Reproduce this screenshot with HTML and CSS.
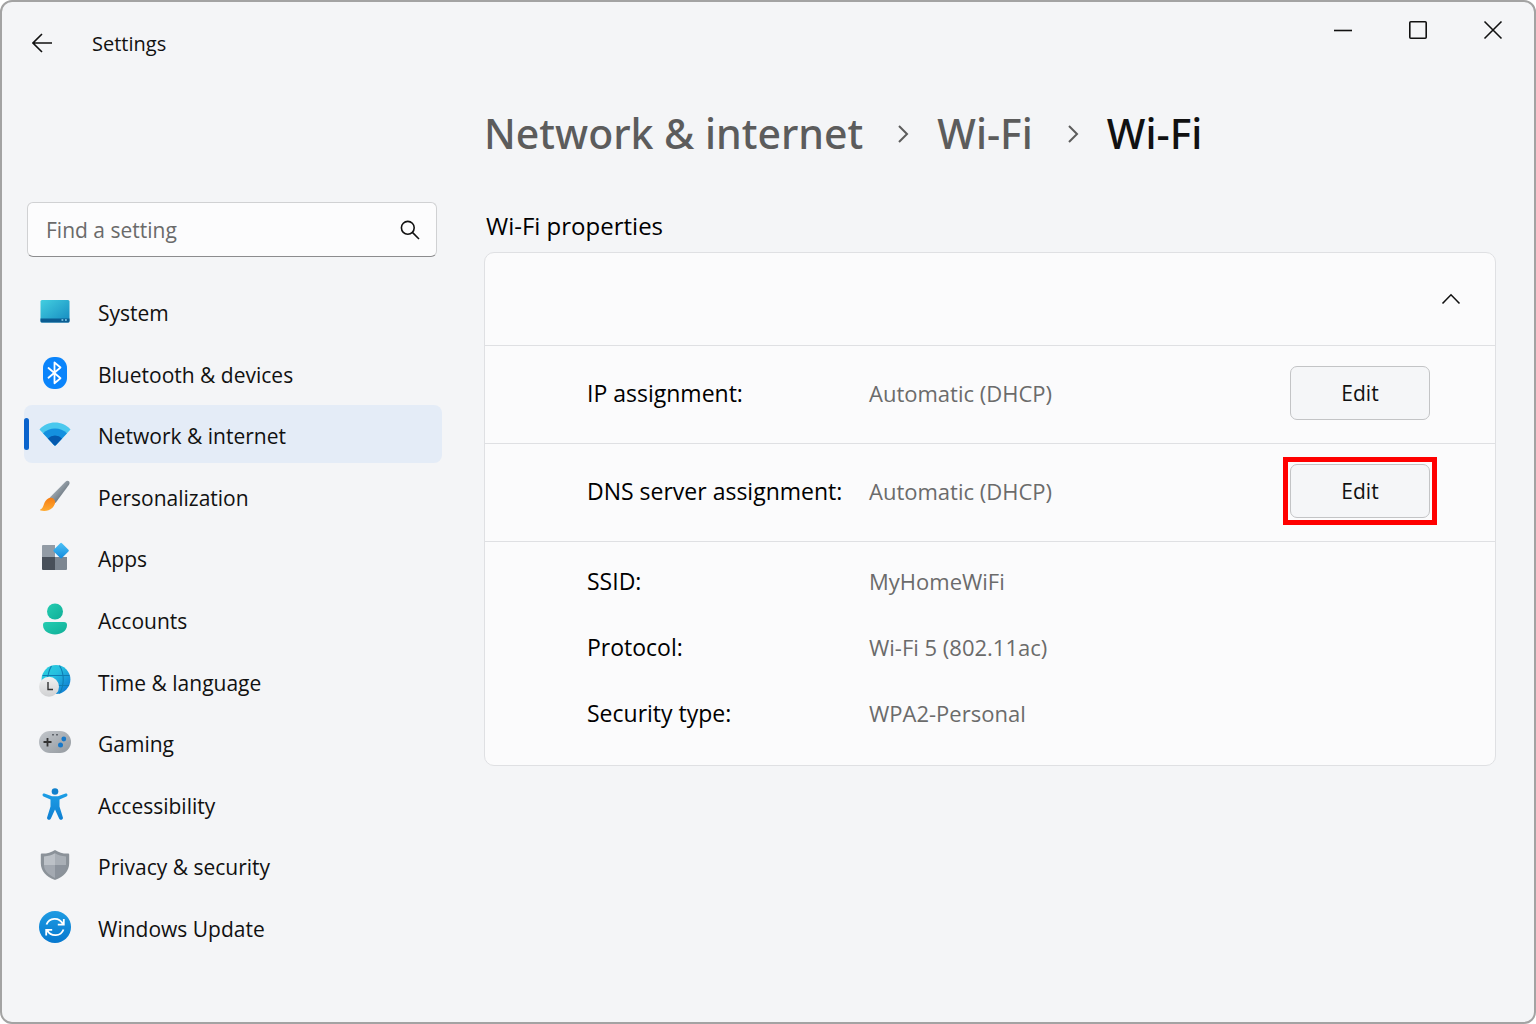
FILE: index.html
```
<!DOCTYPE html>
<html lang="en">
<head>
    <meta charset="UTF-8">
    <meta name="viewport" content="width=device-width, initial-scale=1.0">
    <title>Settings</title>
    <link rel="stylesheet" href="styles.css">
</head>
<body>

<div class="window">
    <header class="titlebar">
        <button class="back" type="button" aria-label="Back">
            <svg width="20" height="20" viewBox="0 0 20 20"><path d="M10 1L1 10l9 9M1 10h19"/></svg>
        </button>
        <span class="app-name">Settings</span>
        <div class="window-controls">
            <button type="button" aria-label="Minimize">
                <svg width="20" height="20" viewBox="0 0 20 20"><path d="M1 10.5h18"/></svg>
            </button>
            <button type="button" aria-label="Maximize">
                <svg width="20" height="20" viewBox="0 0 20 20"><rect x="1.8" y="1.8" width="16.4" height="16.4" rx="1"/></svg>
            </button>
            <button type="button" aria-label="Close">
                <svg width="20" height="20" viewBox="0 0 20 20"><path d="M1.5 1.5l17 17M18.5 1.5l-17 17"/></svg>
            </button>
        </div>
    </header>

    <div class="layout">
        <aside class="sidebar">
            <form class="search" role="search">
                <input type="search" placeholder="Find a setting" aria-label="Find a setting">
                <button type="button" aria-label="Search">
                    <svg width="20" height="20" viewBox="0 0 20 20"><circle cx="7.8" cy="7.8" r="6.4"/><path d="M12.4 12.4l6.6 6.6"/></svg>
                </button>
            </form>

            <nav class="menu">
                <a href="#">
                    <svg width="32" height="32" viewBox="0 0 32 32">
                        <defs>
                            <linearGradient id="sys" x1="0" y1="0" x2="1" y2="1"><stop offset="0" stop-color="#43cfe0"/><stop offset="1" stop-color="#1489c0"/></linearGradient>
                        </defs>
                        <rect x="1.5" y="5" width="29" height="22.5" rx="1.5" fill="url(#sys)"/>
                        <path d="M1.5 23.5h29V26a1.5 1.5 0 0 1-1.5 1.5H3A1.5 1.5 0 0 1 1.5 26z" fill="#0b5c91"/>
                        <path d="M22.5 25h1.8M26 25h1.8" stroke="#8cd3ee" stroke-width="1.4"/>
                    </svg>
                    System
                </a>
                <a href="#">
                    <svg width="32" height="32" viewBox="0 0 32 32">
                        <rect x="4" y="0" width="24" height="32" rx="11" fill="#0a84fb"/>
                        <path d="M9.5 11l12 10.2-6 5V5.5l6 5-12 10.2" fill="none" stroke="#fff" stroke-width="1.8" stroke-linejoin="round" stroke-linecap="round"/>
                    </svg>
                    Bluetooth &amp; devices
                </a>
                <a href="#" class="active" aria-current="page">
                    <svg width="32" height="32" viewBox="0 0 32 32">
                        <defs>
                            <clipPath id="fan"><path d="M.5 11.5C4.5 6.8 10 4.5 16 4.5s11.5 2.3 15.5 7L16.8 27.2a1.1 1.1 0 0 1-1.6 0z"/></clipPath>
                        </defs>
                        <g clip-path="url(#fan)">
                            <rect width="32" height="32" fill="#4ac8ee"/>
                            <circle cx="16" cy="27.5" r="17" fill="#1490df"/>
                            <circle cx="16" cy="27.5" r="10" fill="#0459ae"/>
                        </g>
                    </svg>
                    Network &amp; internet
                </a>
                <a href="#">
                    <svg width="32" height="32" viewBox="0 0 32 32">
                        <defs>
                            <linearGradient id="handle" x1="0" y1="0" x2="1" y2="1"><stop offset="0.3" stop-color="#a3adb5"/><stop offset="0.7" stop-color="#6b7680"/></linearGradient>
                            <linearGradient id="bristle" x1="0" y1="0" x2="0" y2="1"><stop offset="0" stop-color="#f57c12"/><stop offset="1" stop-color="#ffab32"/></linearGradient>
                        </defs>
                        <path d="M10.8 17.5L26.2 1.9c2.7-2.5 5.6-.1 3.8 2.8L16.5 23z" fill="url(#handle)"/>
                        <path d="M10 18c3.8-1.5 7.3 2 5.8 6-2 5.500-8 8-14.200 6.500-.8-.2-.7-1 .1-1.200C5.500 28 4 20.500 10 18z" fill="url(#bristle)"/>
                    </svg>
                    Personalization
                </a>
                <a href="#">
                    <svg width="32" height="32" viewBox="0 0 32 32">
                        <defs>
                            <linearGradient id="tile" x1="0" y1="0" x2="1" y2="1"><stop offset="0" stop-color="#4fc3f7"/><stop offset="1" stop-color="#1089dc"/></linearGradient>
                        </defs>
                        <path d="M4 4h12v12H3V5a1 1 0 0 1 1-1z" fill="#929ba5"/>
                        <path d="M3 16h13v13H4a1 1 0 0 1-1-1z" fill="#48505a"/>
                        <path d="M16 16h12v12a1 1 0 0 1-1 1H16z" fill="#7c8691"/>
                        <rect x="16.3" y="3.8" width="11.6" height="11.6" rx="1.2" transform="rotate(45 22.1 9.6)" fill="url(#tile)"/>
                    </svg>
                    Apps
                </a>
                <a href="#">
                    <svg width="32" height="32" viewBox="0 0 32 32">
                        <defs>
                            <linearGradient id="person" x1="0" y1="0" x2="1" y2="1"><stop offset="0" stop-color="#25cdb2"/><stop offset="1" stop-color="#0fae97"/></linearGradient>
                        </defs>
                        <circle cx="16" cy="8.5" r="8" fill="url(#person)"/>
                        <path d="M7 19h18a3 3 0 0 1 3 3c0 6-6 9.5-12 9.5S4 28 4 22a3 3 0 0 1 3-3z" fill="url(#person)"/>
                    </svg>
                    Accounts
                </a>
                <a href="#">
                    <svg width="32" height="32" viewBox="0 0 32 32">
                        <defs>
                            <linearGradient id="globe" x1="0" y1="0" x2="1" y2="1"><stop offset="0" stop-color="#2fd3dd"/><stop offset="0.4" stop-color="#25bfe0"/><stop offset="1" stop-color="#0b6ed0"/></linearGradient>
                            <linearGradient id="clock" x1="0" y1="0" x2="0" y2="1"><stop offset="0" stop-color="#f2f2f2"/><stop offset="1" stop-color="#cfd0d2"/></linearGradient>
                        </defs>
                        <circle cx="17" cy="14.5" r="14.4" fill="url(#globe)"/>
                        <path d="M3.5 10.5h27M4 20.5h26M12.5 1c-5 8-5 20 0 28M20.5.5c5 8 5 20 0 28" fill="none" stroke="#0f7db3" stroke-width="1.1"/>
                        <circle cx="10" cy="21.8" r="10" fill="url(#clock)"/>
                        <path d="M9 17v7.5h5" fill="none" stroke="#333" stroke-width="1.4"/>
                    </svg>
                    Time &amp; language
                </a>
                <a href="#">
                    <svg width="32" height="32" viewBox="0 0 32 32">
                        <defs>
                            <linearGradient id="pad" x1="0" y1="0" x2="1" y2="1"><stop offset="0" stop-color="#c3c7cc"/><stop offset="1" stop-color="#93999f"/></linearGradient>
                        </defs>
                        <rect x="0" y="5" width="32" height="22" rx="11" fill="url(#pad)"/>
                        <path d="M4.5 16h8M8.5 12v8.5" stroke="#333" stroke-width="1.8"/>
                        <path d="M13.2 8.8h1.6M17.2 8.8h1.6" stroke="#4b5157" stroke-width="1.6"/>
                        <circle cx="24.8" cy="13" r="2.4" fill="#1778c8"/>
                        <circle cx="21.5" cy="19" r="2.5" fill="#1778c8"/>
                    </svg>
                    Gaming
                </a>
                <a href="#">
                    <svg width="32" height="32" viewBox="0 0 32 32">
                        <defs>
                            <linearGradient id="acc" x1="0" y1="0" x2="0" y2="1"><stop offset="0" stop-color="#1c9ee6"/><stop offset="1" stop-color="#0f7fd2"/></linearGradient>
                        </defs>
                        <circle cx="16" cy="3.5" r="3.3" fill="#0f80cc"/>
                        <path d="M5.5 5.5L13 8.3h6l7.5-2.8c2-.6 2.8 2 1 2.9L20.5 11.5v7l3.4 11c.5 2.3-2.9 3.1-3.8 1L16 21.5 11.9 30.5c-.9 2.1-4.3 1.3-3.8-1l3.4-11v-7L4.5 8.4c-1.8-.9-1-3.5 1-2.9z" fill="url(#acc)"/>
                    </svg>
                    Accessibility
                </a>
                <a href="#">
                    <svg width="32" height="32" viewBox="0 0 32 32">
                        <defs>
                            <clipPath id="shield-in"><path d="M16 4.3c3 2 6.8 3 11 3.1V16c0 6-4.5 9.5-11 13C9.5 25.5 5 22 5 16V7.4C9.2 7.3 13 6.3 16 4.3z"/></clipPath>
                        </defs>
                        <path d="M16 1c3.8 2.6 8.5 3.8 13.3 3.6.5 0 .9.4.9.9V14c0 8-5.5 13.5-13.6 16.8-.4.2-.8.2-1.2 0C7.3 27.5 1.8 22 1.8 14V5.5c0-.5.4-.9.9-.9C7.5 4.8 12.2 3.6 16 1z" fill="#8b9299"/>
                        <g clip-path="url(#shield-in)">
                            <path d="M0 0h16v16H0z" fill="#bcc1c7"/>
                            <path d="M16 0h16v16H16z" fill="#a9afb6"/>
                            <path d="M0 16h16v16H0z" fill="#a3a9b1"/>
                            <path d="M16 16h16v16H16z" fill="#8c939c"/>
                        </g>
                    </svg>
                    Privacy &amp; security
                </a>
                <a href="#">
                    <svg width="32" height="32" viewBox="0 0 32 32">
                        <defs>
                            <linearGradient id="upd" x1="0" y1="0" x2="0" y2="1"><stop offset="0" stop-color="#1e9be2"/><stop offset="1" stop-color="#0678cf"/></linearGradient>
                        </defs>
                        <circle cx="16" cy="16" r="16" fill="url(#upd)"/>
                        <path d="M7.5 13.5c2.5-7 12.5-8 16.5-.5M24.8 8v5.7h-6M24.5 18.5c-2.5 7-12.5 8-16.5.5M7.2 24.5v-5.7h6" fill="none" stroke="#fff" stroke-width="1.8"/>
                    </svg>
                    Windows Update
                </a>
            </nav>
        </aside>

        <main class="content">
            <div class="breadcrumb">
                <a href="#">Network &amp; internet</a>
                <svg width="12" height="20" viewBox="0 0 12 20"><path d="M2 3l8 8-8 8"/></svg>
                <a href="#">Wi-Fi</a>
                <svg width="12" height="20" viewBox="0 0 12 20"><path d="M2 3l8 8-8 8"/></svg>
                <h1>Wi-Fi</h1>
            </div>

            <h2>Wi-Fi properties</h2>

            <section class="card">
                <div class="card-header">
                    <button type="button" aria-label="Collapse" aria-expanded="true">
                        <svg width="20" height="20" viewBox="0 0 20 20"><path d="M1.5 14.5L10 5.8l8.5 8.7"/></svg>
                    </button>
                </div>
                <div class="row">
                    <span class="label">IP assignment:</span>
                    <span class="value">Automatic (DHCP)</span>
                    <div class="action">
                        <button class="edit" type="button">Edit</button>
                    </div>
                </div>
                <div class="row">
                    <span class="label">DNS server assignment:</span>
                    <span class="value">Automatic (DHCP)</span>
                    <div class="action highlight">
                        <button class="edit" type="button">Edit</button>
                    </div>
                </div>
                <dl class="details">
                    <dt class="label">SSID:</dt>
                    <dd class="value">MyHomeWiFi</dd>
                    <dt class="label">Protocol:</dt>
                    <dd class="value">Wi-Fi 5 (802.11ac)</dd>
                    <dt class="label">Security type:</dt>
                    <dd class="value">WPA2-Personal</dd>
                </dl>
            </section>
        </main>
    </div>
</div>

</body>
</html>
```
FILE: styles.css
```
* {
    box-sizing: border-box;
}
body {
    margin: 0;
    background: #fff;
    color: #111;
    font-family: "Segoe UI", "Open Sans", "Noto Sans", sans-serif;
    font-size: 21px;
}
a {
    color: inherit;
    text-decoration: none;
}
button {
    padding: 0;
    border: none;
    background: none;
    color: inherit;
    font: inherit;
    cursor: pointer;
}
button svg {
    display: block;
    fill: none;
    stroke: #111;
    stroke-width: 1.6;
}
.window {
    display: flex;
    flex-direction: column;
    min-height: 100vh;
    border: 2px solid #a3a3a3;
    border-radius: 12px;
    background: #f4f5f7;
}

/* Title bar */
.titlebar {
    display: flex;
    align-items: flex-start;
    height: 84px;
    padding-right: 4px;
}
.back {
    display: flex;
    align-items: center;
    justify-content: center;
    width: 80px;
    height: 82px;
}
.app-name {
    margin-left: 10px;
    font-size: 20px;
    line-height: 84px;
}
.window-controls {
    display: flex;
    margin-left: auto;
}
.window-controls button {
    display: flex;
    align-items: center;
    justify-content: center;
    width: 75px;
    height: 56px;
}

.layout {
    display: flex;
    flex: 1;
}

/* Sidebar */
.sidebar {
    display: flex;
    flex-direction: column;
    flex: none;
    width: 440px;
    padding: 116px 0 66px 22px;
}
.search {
    display: flex;
    align-items: center;
    height: 55px;
    margin: 0 5px 25px 3px;
    padding: 0 16px 0 18px;
    border: 1px solid #d0d1d3;
    border-bottom-color: #8c8c8e;
    border-radius: 6px;
    background: #fcfcfd;
}
.search input {
    flex: 1;
    min-width: 0;
    padding: 0;
    border: none;
    outline: none;
    background: none;
    color: #111;
    font: inherit;
}
.search input::placeholder {
    color: #6a6a6a;
    opacity: 1;
}
.menu {
    display: flex;
    flex: 1;
    flex-direction: column;
    justify-content: space-between;
}
.menu a {
    display: flex;
    align-items: center;
    gap: 27px;
    height: 58px;
    padding: 4px 0 0 15px;
    border-radius: 8px;
}
.menu svg {
    margin-bottom: 4px;
}
.menu .active {
    position: relative;
    background: #e4ecf7;
}
.menu .active::before {
    content: "";
    position: absolute;
    left: 0;
    top: 13px;
    width: 5px;
    height: 32px;
    border-radius: 3px;
    background: #0a63cc;
}

/* Content */
.content {
    flex: 1;
    min-width: 0;
    padding: 17px 38px 40px 42px;
}
.breadcrumb {
    display: flex;
    align-items: center;
    height: 60px;
    color: #5c5c5c;
    font-family: "Segoe UI", "Noto Sans", "Open Sans", sans-serif;
    font-size: 41px;
    font-weight: 500;
}
.breadcrumb svg {
    margin: 0 28px 0 34px;
    fill: none;
    stroke: #5c5c5c;
    stroke-width: 2;
}
h1 {
    margin: 0;
    color: #111;
    font-size: 41px;
    font-weight: 500;
}
h2 {
    margin: 45px 0 8px 2px;
    color: #000;
    font-size: 24px;
    font-weight: 500;
    line-height: 36px;
}
.card {
    border: 1px solid #dfe0e3;
    border-radius: 10px;
    background: #fbfbfc;
}
.card-header {
    display: flex;
    align-items: center;
    justify-content: flex-end;
    height: 92px;
    padding-right: 34px;
}
.row {
    display: grid;
    grid-template-columns: 282px 1fr 140px;
    align-items: center;
    height: 98px;
    padding: 0 65px 4px 102px;
    border-top: 1px solid #dfe0e3;
}
.label {
    color: #000;
    font-size: 23px;
}
.value {
    color: #6b6b6b;
    font-size: 22px;
}
.action {
    display: grid;
}
.edit {
    height: 54px;
    border: 1px solid #c3c4c6;
    border-radius: 7px;
    background: #f5f6f8;
}
.highlight {
    outline: 5px solid #f00;
    outline-offset: 2px;
}
.details {
    display: grid;
    grid-template-columns: 282px 1fr;
    grid-auto-rows: 66px;
    align-items: center;
    margin: 0;
    padding: 6px 65px 19px 102px;
    border-top: 1px solid #dfe0e3;
}
.details dd {
    margin: 0;
}
```
